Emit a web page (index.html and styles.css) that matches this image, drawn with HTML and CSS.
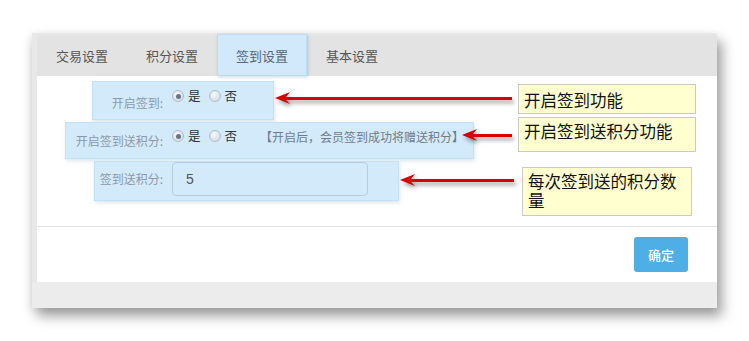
FILE: index.html
```html
<!DOCTYPE html>
<html lang="zh-CN">
<head>
<meta charset="utf-8">
<title>签到设置</title>
<link rel="stylesheet" href="styles.css">
</head>
<body>
<div class="frame">
  <div class="tabs">
    <div class="tab">交易设置</div>
    <div class="tab">积分设置</div>
    <div class="tab active">签到设置</div>
    <div class="tab">基本设置</div>
  </div>
  <div class="panel">
    <div class="form">
      <div class="hl hl-1"></div>
      <div class="hl hl-2"></div>
      <div class="hl hl-3"></div>

      <div class="row row-1">
        <div class="label">开启签到:</div>
        <div class="ctrl">
          <span class="radio checked"></span><span class="opt">是</span>
          <span class="radio"></span><span class="opt">否</span>
        </div>
      </div>
      <div class="row row-2">
        <div class="label">开启签到送积分:</div>
        <div class="ctrl">
          <span class="radio checked"></span><span class="opt">是</span>
          <span class="radio"></span><span class="opt">否</span>
          <span class="hint">【开启后，会员签到成功将赠送积分】</span>
        </div>
      </div>
      <div class="row row-3">
        <div class="label">签到送积分:</div>
        <div class="ctrl">
          <div class="input">5</div>
        </div>
      </div>

      <svg class="arrow arrow-1" width="237" height="14" viewBox="0 0 237 14"><path d="M0 7 L15 1 L11 6 L237 6 L237 9 L11 9 L15 13 Z" fill="#d90000"/></svg>
      <svg class="arrow arrow-2" width="50" height="14" viewBox="0 0 50 14"><path d="M0 7 L15 1 L11 6 L50 6 L50 9 L11 9 L15 13 Z" fill="#d90000"/></svg>
      <svg class="arrow arrow-3" width="114" height="14" viewBox="0 0 114 14"><path d="M0 7 L15 1 L11 6 L114 6 L114 9 L11 9 L15 13 Z" fill="#d90000"/></svg>

      <div class="note note-1">开启签到功能</div>
      <div class="note note-2">开启签到送积分功能</div>
      <div class="note note-3">每次签到送的积分数量</div>
    </div>
    <div class="footer">
      <button class="btn">确定</button>
    </div>
  </div>
  <div class="bottom"></div>
</div>
</body>
</html>
```

FILE: styles.css
```css
html, body {
  margin: 0;
  padding: 0;
  background: #ffffff;
}
body {
  font-family: "Noto Sans CJK SC", "Noto Sans", sans-serif;
  width: 749px;
  height: 341px;
  overflow: hidden;
}
.frame {
  margin: 33px 0 0 32px;
  width: 680px;
  padding: 2px 0 0 5px;
  background: #e8e8e8;
  box-shadow: 5px 8px 12px rgba(0,0,0,0.38), -3px 2px 8px rgba(0,0,0,0.07);
}
.tabs {
  display: flex;
  height: 41px;
  background: #e3e3e3;
}
.tab {
  width: 90px;
  height: 41px;
  box-sizing: border-box;
  display: flex;
  align-items: center;
  justify-content: center;
  font-size: 13px;
  color: #555;
}
.tab.active {
  margin-top: -1px;
  height: 42px;
  background: #d2e9fb;
  border: 1px solid #bcdcf3;
  box-shadow: 1px 1px 3px rgba(90,140,180,0.35);
  color: #56677a;
}
.panel {
  background: #ffffff;
}
.form {
  position: relative;
  height: 151px;
  padding-top: 5px;
  box-sizing: border-box;
  border-bottom: 1px solid #e3e3e3;
}
.hl {
  position: absolute;
  background: #d3eafb;
  border: 1px solid #c2e0f6;
  box-shadow: 1px 2px 4px rgba(120,160,190,0.25);
  box-sizing: border-box;
}
.hl-1 { left: 55px; top: 5px; width: 182px; height: 39px; }
.hl-2 { left: 28px; top: 46px; width: 409px; height: 37px; }
.hl-3 { left: 57px; top: 85px; width: 305px; height: 40px; }

.row {
  position: relative;
  display: grid;
  grid-template-columns: 126px auto;
  column-gap: 9px;
  align-items: start;
}
.label {
  text-align: right;
  font-size: 12px;
  line-height: 16px;
  color: #8d9aa6;
}
.ctrl {
  display: flex;
  align-items: center;
  font-size: 12.5px;
  line-height: 14px;
  color: #333;
}
.row-1 { height: 41px; }
.row-1 .label { margin-top: 14px; }
.row-1 .ctrl { margin-top: 8px; }
.row-2 { height: 38px; }
.row-2 .label { margin-top: 11px; }
.row-2 .ctrl { margin-top: 6px; }
.row-3 { height: 42px; }
.row-3 .label { margin-top: 11px; }
.row-3 .ctrl { margin-top: 2px; }

.radio {
  width: 12px;
  height: 12px;
  box-sizing: border-box;
  border-radius: 50%;
  border: 1px solid #aebccb;
  background: radial-gradient(circle at 40% 35%, #f4f8fb, #c9d6e2);
  display: flex;
  align-items: center;
  justify-content: center;
}
.radio.checked::after {
  content: "";
  width: 5px;
  height: 5px;
  border-radius: 50%;
  background: #6b7480;
}
.opt {
  margin: 0 8px 0 4px;
}
.hint {
  margin-left: 15px;
  margin-top: 2px;
  font-size: 12px;
  color: #707c88;
}
.input {
  width: 196px;
  height: 34px;
  box-sizing: border-box;
  border: 1px solid #b5cddf;
  border-radius: 4px;
  padding-left: 13px;
  font-family: "Liberation Sans", Arial, sans-serif;
  font-size: 14px;
  line-height: 32px;
  color: #555;
}

.arrow {
  position: absolute;
  filter: drop-shadow(2px 3px 2px rgba(0,0,0,0.4));
}
.arrow-1 { left: 238px; top: 15px; }
.arrow-2 { left: 425px; top: 52px; }
.arrow-3 { left: 363px; top: 97px; }

.note {
  position: absolute;
  background: #ffffd0;
  border: 1px solid #c9c9c9;
  box-sizing: border-box;
  padding: 4px 5px;
  font-size: 16.5px;
  line-height: 19px;
  color: #111;
}
.note-1 { left: 481px; top: 8px; width: 178px; height: 30px; padding-top: 6px; }
.note-2 { left: 481px; top: 41px; width: 178px; height: 35px; padding-top: 4px; }
.note-3 { left: 485px; top: 91px; width: 170px; height: 49px; }

.footer {
  height: 55px;
  display: flex;
  justify-content: flex-end;
  align-items: flex-start;
  padding: 10px 29px 0 0;
  box-sizing: border-box;
}
.btn {
  width: 54px;
  height: 35px;
  border: none;
  border-radius: 3px;
  background: #4eaee6;
  color: #fff;
  font-family: "Noto Sans CJK SC", sans-serif;
  font-size: 13px;
  font-weight: 500;
  padding: 0;
}
.bottom {
  height: 26px;
  margin-left: -5px;
  background: #ececec;
}
```
